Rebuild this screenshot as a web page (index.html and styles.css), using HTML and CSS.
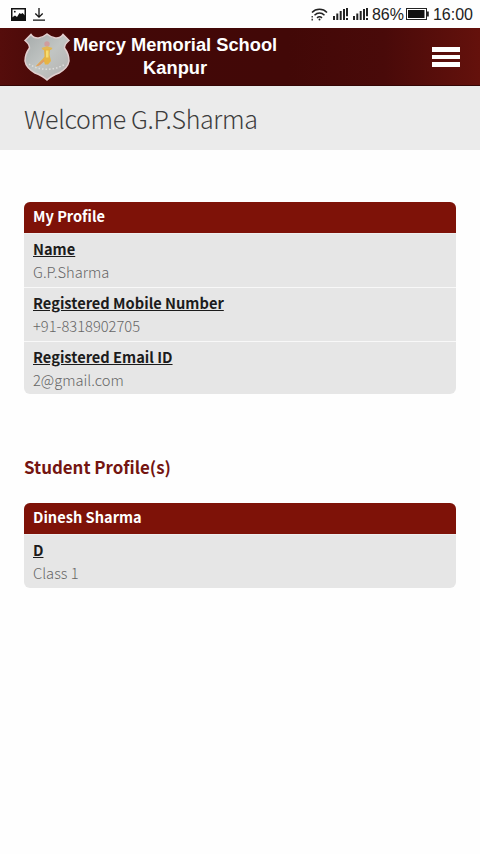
FILE: index.html
```html
<!DOCTYPE html>
<html lang="en">
<head>
  <meta charset="UTF-8" />
  <meta name="viewport" content="width=device-width, initial-scale=1.0"/>
  <title>Mercy Memorial School Kanpur</title>
  <link rel="stylesheet" href="styles.css">
</head>
<body>

  <div class="status-bar">
    <div class="status-left">
      <svg width="15" height="13" viewBox="0 0 15 13">
        <rect x="0.75" y="0.75" width="13.5" height="11.5" fill="#fff" stroke="#111" stroke-width="1.5"/>
        <path d="M1 12V9.500l3-2 2 1.500 2.500-4L10 6l1.500-1L14 7.500V12z" fill="#111"/>
        <circle cx="3.800" cy="3.700" r="0.900" fill="#111"/>
      </svg>
      <svg width="12" height="13" viewBox="0 0 12 13" fill="none" stroke="#111" stroke-width="1.3">
        <path d="M6 0v9M2.3 5.5L6 9.2l3.7-3.7M0 12.2h12"/>
      </svg>
    </div>
    <div class="status-right">
      <svg class="wifi" width="17" height="13" viewBox="0 0 17 13" fill="none" stroke="#222" stroke-width="1.5">
        <path d="M1 4.4C5 .2 12 .2 16 4.4M3.5 7.2c3-2.8 7-2.8 10 0M6 9.8c1.6-1.3 3.4-1.3 5 0"/>
        <circle cx="8.5" cy="11.6" r="1" fill="#222" stroke="none"/>
        <path d="M1.2 8v1.5M1.2 10.8v1.7" stroke-width="1.3"/>
      </svg>
      <svg class="signal" width="15" height="12" viewBox="0 0 15 12" fill="#222">
        <path d="M0 8h2v4H0zM3.300 5.500h2V12h-2zM6.700 3h2v9h-2zM10 1h2v11h-2zM13 0h2v8.300h-2zM13 10h2v2h-2z"/>
      </svg>
      <svg class="signal" width="15" height="12" viewBox="0 0 15 12" fill="#222">
        <path d="M0 8h2v4H0zM3.300 5.500h2V12h-2zM6.700 3h2v9h-2zM10 1h2v11h-2zM13 0h2v8.300h-2zM13 10h2v2h-2z"/>
      </svg>
      <span class="percent">86%</span>
      <svg class="battery" width="23" height="12" viewBox="0 0 23 12">
        <rect x="0.5" y="0.5" width="20" height="11" fill="#fff" stroke="#222"/>
        <rect x="2" y="2" width="16.5" height="8" fill="#111"/>
        <path d="M21 3.5h1.8v5H21z" fill="#222"/>
      </svg>
      <span class="clock">16:00</span>
    </div>
  </div>

  <header>
    <svg class="logo" width="46" height="48" viewBox="0 0 46 48">
      <defs>
        <linearGradient id="shield" x1="0" y1="0" x2="1" y2="1">
          <stop offset="0" stop-color="#a6abab"/>
          <stop offset="0.5" stop-color="#c1c5c3"/>
          <stop offset="1" stop-color="#b3b0af"/>
        </linearGradient>
      </defs>
      <path d="M7 1.500Q10 5.500 14.500 5Q19.500 4 23 1Q26.500 4 31.500 5Q36 5.500 39 1.500L45 7.500Q40.500 11 40.500 15Q45 21 45 28Q44 35 35 40Q27 43 23 47Q19 43 11 40Q2 35 1 28Q1 21 5.500 15Q5.500 11 1 7.500Z" fill="url(#shield)" stroke="#e2cfcf" stroke-width="1.500"/>
      <circle cx="23" cy="11" r="2.700" fill="#cf9d9d"/>
      <path d="M17.500 15l5.500-1.800 5.500 1.800-1.500 2h-8z" fill="#e3b853"/>
      <path d="M20 16.500h6l-.5 5 1.500 6.500-3 3.500h-3l-1-3-5 4-3.500 1c3.500-4 6.500-6.500 9-10z" fill="#e6b445"/>
      <path d="M22 17.500h2.500v7H22z" fill="#f5dc70"/>
      <path d="M12 33.500c2.500-3 5-5 7.500-7l1 1.500-4.500 4z" fill="#dd9a6c"/>
      <path d="M5 31c10 7 26 7 36 0" fill="none" stroke="#dededc" stroke-width="1.500" stroke-dasharray="1.500 2"/>
    </svg>
    <div class="school-name">Mercy Memorial School<br>Kanpur</div>
    <div class="menu">
      <span></span>
      <span></span>
      <span></span>
    </div>
  </header>

  <div class="welcome"><h1>Welcome G.P.Sharma</h1></div>

  <main>
    <div class="card">
      <div class="card-title">My Profile</div>
      <div class="card-row">
        <div class="label">Name</div>
        <div class="value">G.P.Sharma</div>
      </div>
      <div class="card-row">
        <div class="label">Registered Mobile Number</div>
        <div class="value">+91-8318902705</div>
      </div>
      <div class="card-row">
        <div class="label">Registered Email ID</div>
        <div class="value">2@gmail.com</div>
      </div>
    </div>

    <h2>Student Profile(s)</h2>

    <div class="card">
      <div class="card-title">Dinesh Sharma</div>
      <div class="card-row">
        <div class="label">D</div>
        <div class="value">Class 1</div>
      </div>
    </div>
  </main>

</body>
</html>
```
FILE: styles.css
```css
body {
  margin: 0;
  font-family: "Noto Sans CJK SC", "Noto Sans", sans-serif;
  background-color: #fefefe;
}

.status-bar {
  height: 28px;
  padding: 0 7px 0 11px;
  display: flex;
  align-items: center;
  justify-content: space-between;
  font-family: "Liberation Sans", Arial, sans-serif;
  font-size: 16px;
  color: #222;
}

.status-left, .status-right {
  display: flex;
  align-items: center;
}

.status-left {
  gap: 7px;
}

.signal {
  margin-left: 5px;
}

.percent, .clock {
  padding-top: 1px;
}

.percent {
  margin-left: 4px;
}

.battery {
  margin: 0 4px 0 2px;
}

header {
  height: 58px;
  box-sizing: border-box;
  padding: 0 20px 0 24px;
  display: flex;
  align-items: center;
  background: linear-gradient(90deg, #550d0b 0%, #430807 15%, #420807 60%, #490a09 80%, #64110c 100%);
  border-bottom: 1px solid #350605;
}

.school-name {
  margin-left: 3px;
  padding-bottom: 2px;
  font-family: "Liberation Sans", Arial, sans-serif;
  font-size: 18.3px;
  font-weight: bold;
  line-height: 23px;
  text-align: center;
  white-space: nowrap;
  color: white;
}

.menu {
  width: 28px;
  margin-left: auto;
  padding-top: 1px;
  display: flex;
  flex-direction: column;
  gap: 3px;
}

.menu span {
  height: 4.5px;
  background-color: white;
}

.welcome {
  height: 64px;
  padding: 0 24px;
  background-color: #ebebeb;
}

h1 {
  margin: 0;
  font-size: 25px;
  font-weight: 300;
  line-height: 64px;
  letter-spacing: -0.35px;
  color: #3c3c3c;
}

main {
  padding: 52px 24px 0;
}

.card {
  border-radius: 6px;
  overflow: hidden;
  background-color: #e6e6e6;
}

.card-title {
  height: 31px;
  padding: 0 9px;
  font-size: 14.6px;
  font-weight: bold;
  line-height: 28px;
  color: white;
  background-color: #7e1208;
  border-bottom: 1px solid #eee;
}

.card-row {
  height: 53px;
  padding: 0 9px;
  line-height: 23px;
}

.card-row + .card-row {
  border-top: 1px solid #f8f8f8;
}

.card-row + .card-row:last-child {
  height: 52px;
}

.label {
  padding-top: 3px;
  font-size: 14.65px;
  font-weight: bold;
  text-decoration: underline;
  color: #1c1c1c;
}

.value {
  font-size: 14.7px;
  font-weight: 300;
  color: #666;
}

h2 {
  margin: 60px 0 24px;
  font-size: 16.9px;
  font-weight: bold;
  line-height: 25px;
  color: #741511;
}
```
